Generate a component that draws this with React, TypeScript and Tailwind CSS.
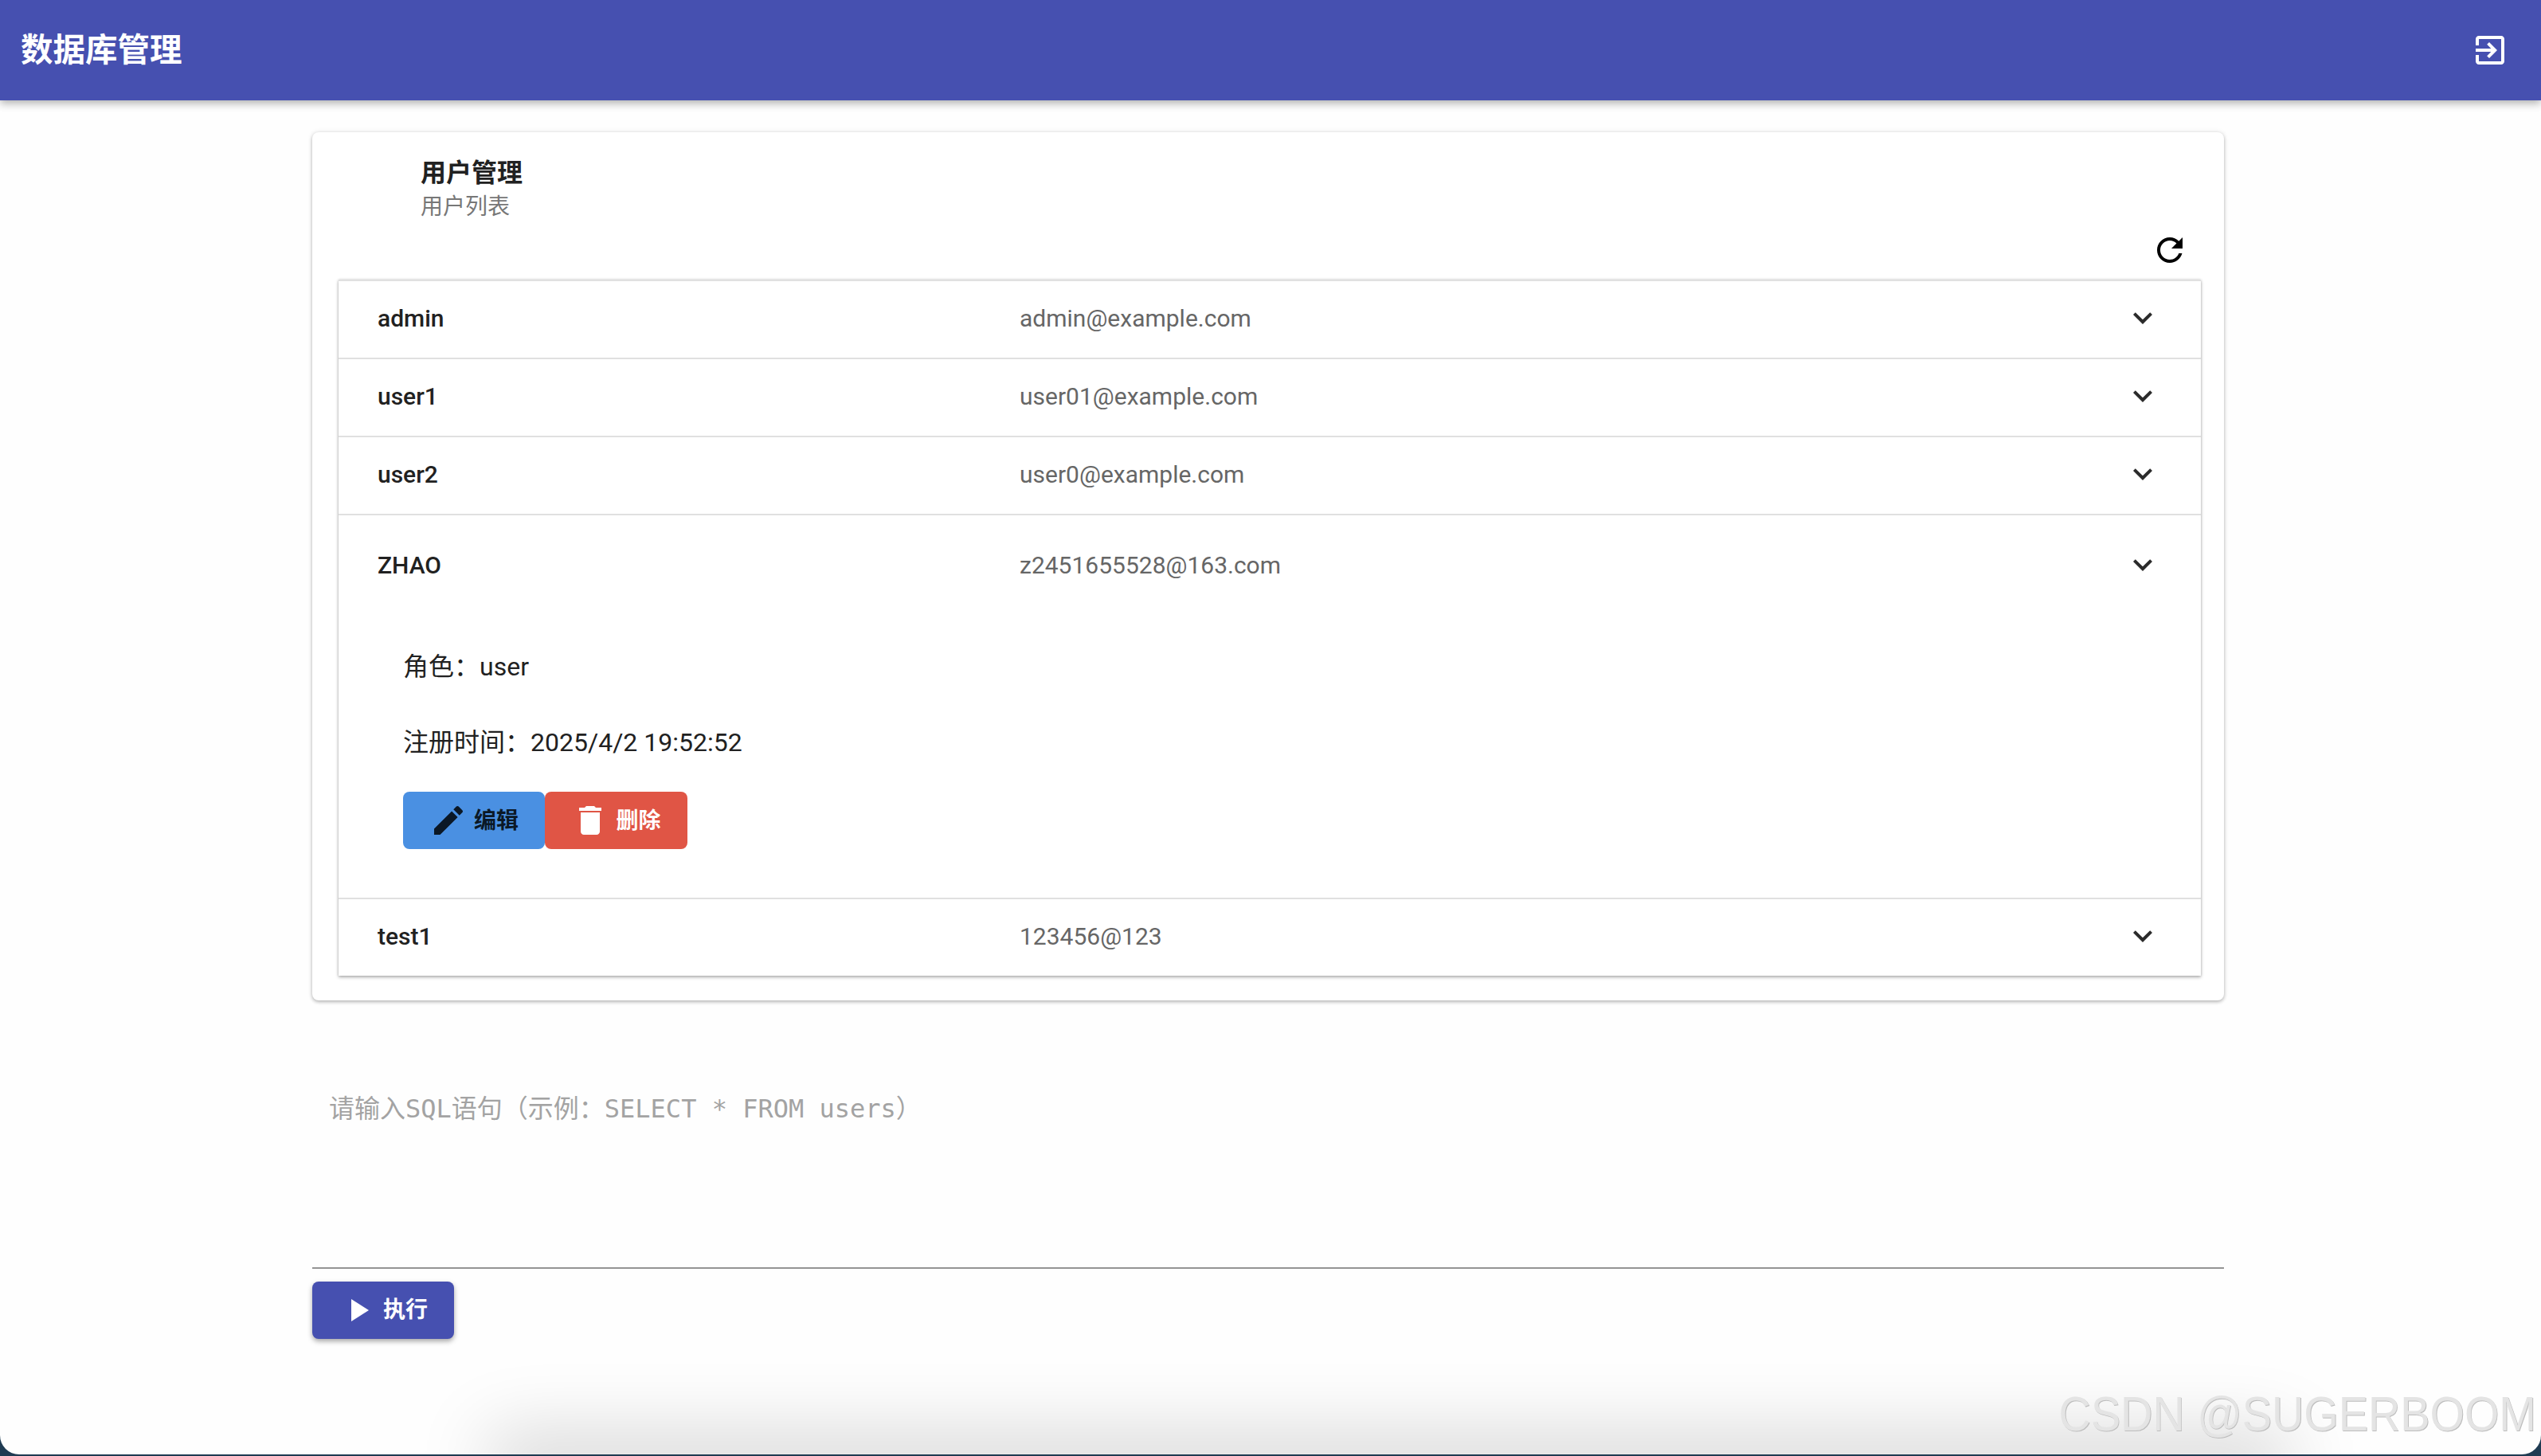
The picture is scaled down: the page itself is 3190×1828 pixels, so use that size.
const ICONS = {
  expand: "M16.59 8.59 12 13.17 7.41 8.59 6 10l6 6 6-6z",
  refresh:
    "M17.65 6.35C16.2 4.9 14.21 4 12 4c-4.42 0-7.99 3.58-7.99 8s3.57 8 7.99 8c3.73 0 6.84-2.55 7.73-6h-2.08c-.82 2.33-3.04 4-5.65 4-3.31 0-6-2.69-6-6s2.69-6 6-6c1.66 0 3.14.69 4.22 1.78L13 11h7V4l-2.35 2.35z",
  exit: "M10.09 15.59 11.5 17l5-5-5-5-1.41 1.41L12.67 11H3v2h9.67l-2.58 2.59zM19 3H5c-1.11 0-2 .9-2 2v4h2V5h14v14H5v-4H3v4c0 1.1.89 2 2 2h14c1.1 0 2-.9 2-2V5c0-1.1-.9-2-2-2z",
  edit: "M3 17.25V21h3.75L17.81 9.94l-3.75-3.75L3 17.25zM20.71 7.04c.39-.39.39-1.02 0-1.41l-2.34-2.34c-.39-.39-1.02-.39-1.41 0l-1.83 1.83 3.75 3.75 1.83-1.83z",
  trash: "M6 19c0 1.1.9 2 2 2h8c1.1 0 2-.9 2-2V7H6v12zM19 4h-3.5l-1-1h-5l-1 1H5v2h14V4z",
  play: "M8 5v14l11-7z",
}

function Icon({ d, className }: { d: string; className?: string }) {
  return (
    <svg viewBox="0 0 24 24" fill="currentColor" className={className ?? "h-12 w-12 shrink-0"}>
      <path d={d} />
    </svg>
  )
}

const users = [
  { name: "admin", email: "admin@example.com" },
  { name: "user1", email: "user01@example.com" },
  { name: "user2", email: "user0@example.com" },
  { name: "ZHAO", email: "z2451655528@163.com", open: true },
  { name: "test1", email: "123456@123" },
]

function UserRow({ name, email, open }: { name: string; email: string; open?: boolean }) {
  return (
    <div className="border-t-2 border-[#e0e0e0]">
      <div className={`flex items-center pb-[4px] pl-[49px] pr-[49px] ${open ? "h-[128px]" : "h-[96px]"}`}>
        <div className="w-[806px] shrink-0 text-[30px] font-medium text-[#212121]">{name}</div>
        <div className="flex-1 text-[30px] text-[#666666]">{email}</div>
        <Icon d={ICONS.expand} className="h-12 w-12 shrink-0 text-[#2b2b2b]" />
      </div>
      {open && (
        <div className="pl-[81px] pt-[40px] pb-[61px] text-[32px] leading-[45px] text-[#212121]">
          <p>角色：user</p>
          <p className="mt-[50px]">注册时间：2025/4/2 19:52:52</p>
          <div className="mt-[39px] flex">
            <button className="flex h-[72px] w-[178px] items-center justify-center gap-2 rounded-lg bg-[#4a90e2] text-[28px] font-bold text-[#0b1826]">
              <Icon d={ICONS.edit} />
              编辑
            </button>
            <button className="flex h-[72px] w-[179px] items-center justify-center gap-2 rounded-lg bg-[#e05545] text-[28px] font-bold text-white">
              <Icon d={ICONS.trash} />
              删除
            </button>
          </div>
        </div>
      )}
    </div>
  )
}

export default function App() {
  return (
    <div className="relative h-[1828px] w-[3190px] overflow-hidden bg-[#1f3b52] font-['Roboto','Noto_Sans_CJK_SC',sans-serif]">
      <div className="relative h-[1826px] overflow-hidden rounded-b-[24px] bg-[#fefefe]">
        {/* Header */}
        <header className="relative z-10 flex h-[126px] items-center justify-between bg-[#4650b0] pl-[26px] pr-[40px] shadow-[0_4px_10px_rgba(0,0,0,0.3)]">
          <h1 className="text-[40.5px] font-bold text-white">数据库管理</h1>
          <Icon d={ICONS.exit} className="h-12 w-12 text-white" />
        </header>

        <main className="ml-[392px] mt-[40px] w-[2400px]">
          {/* User list card */}
          <section className="rounded-lg bg-white pb-[31px] shadow-[0_2px_4px_rgba(0,0,0,0.25),0_0_6px_rgba(0,0,0,0.1)]">
            <div className="pl-[136px] pt-[29px]">
              <h2 className="text-[32px] leading-[44px] font-bold text-[#212121]">用户管理</h2>
              <p className="mt-[3px] text-[28px] leading-[36px] text-[#777777]">用户列表</p>
            </div>
            <div className="flex justify-end pr-[44px] pt-[12px]">
              <Icon d={ICONS.refresh} className="h-12 w-12 text-black" />
            </div>
            <div className="ml-[33px] mr-[29px] mt-[13px] shadow-[0_2px_4px_rgba(0,0,0,0.3),0_0_3px_rgba(0,0,0,0.15)]">
              {users.map((u) => (
                <UserRow key={u.name} {...u} />
              ))}
            </div>
          </section>

          {/* SQL input */}
          <textarea
            readOnly
            placeholder="请输入SQL语句（示例：SELECT * FROM users）"
            className="mt-[108px] block h-[229px] w-full resize-none border-b-2 border-[#949494] px-[21px] pt-[6px] font-['DejaVu_Sans_Mono','Noto_Sans_CJK_SC',monospace] text-[32px] leading-[44px] outline-none placeholder:text-[#a3a3a3]"
          />
          <button className="mt-[16px] flex h-[72px] w-[178px] items-center justify-center gap-2 rounded-lg bg-[#4650b0] text-[28px] font-bold text-white shadow-[0_3px_6px_rgba(0,0,0,0.35)]">
            <Icon d={ICONS.play} />
            执行
          </button>
        </main>

        {/* Window shadow at the bottom edge and watermark */}
        <div className="absolute -bottom-[20px] left-[640px] right-[340px] h-[20px] shadow-[0_0_90px_26px_rgba(0,0,0,0.17)]" />
        <div className="absolute bottom-[20px] right-[6px] origin-right scale-x-[0.9] font-['Liberation_Sans',sans-serif] text-[62px] leading-none text-[#e4e4e4] [text-shadow:1px_1px_0_#bdbdbd]">
          CSDN @SUGERBOOM
        </div>
      </div>
    </div>
  )
}
